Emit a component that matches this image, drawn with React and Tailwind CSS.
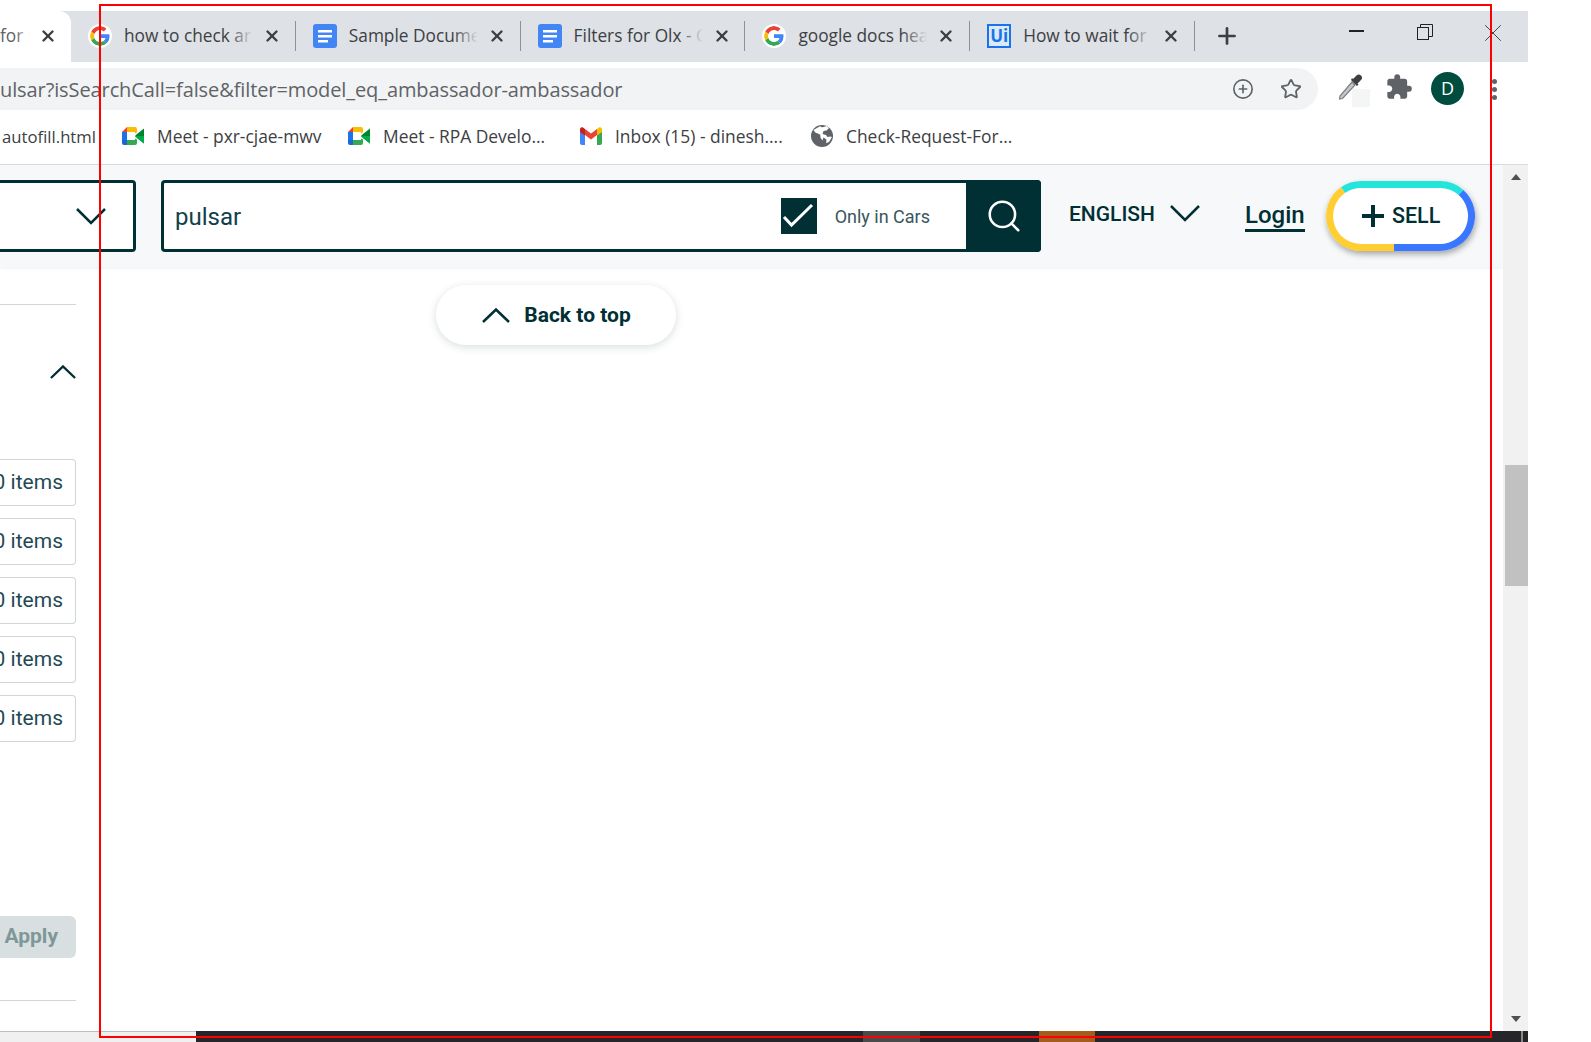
import React from 'react';
import { X, Plus, Star, CirclePlus, Search } from 'lucide-react';
import { MdExtension } from 'react-icons/md';

const GoogleIcon = () => (
  <svg viewBox="0 0 48 48" className="w-[24px] h-[24px] rounded-full bg-white p-[2px]">
    <path fill="#EA4335" d="M24 9.5c3.5 0 6.7 1.2 9.2 3.6l6.9-6.9C35.9 2.4 30.5 0 24 0 14.6 0 6.5 5.4 2.6 13.2l8 6.2C12.5 13.7 17.8 9.5 24 9.5z" />
    <path fill="#4285F4" d="M47 24.5c0-1.6-.1-3.100-.4-4.500H24v9h12.900c-.6 3-2.200 5.500-4.700 7.200l7.700 6c4.500-4.200 7.100-10.300 7.100-17.700z" />
    <path fill="#FBBC05" d="M10.500 28.600c-.5-1.500-.8-3-.8-4.600s.3-3.100.8-4.600l-8-6.200C.9 16.500 0 20.100 0 24s.9 7.500 2.600 10.800l7.900-6.200z" />
    <path fill="#34A853" d="M24 48c6.500 0 11.900-2.100 15.900-5.800l-7.700-6c-2.100 1.400-4.900 2.300-8.200 2.300-6.200 0-11.500-4.200-13.400-9.900l-8 6.200C6.500 42.600 14.600 48 24 48z" />
  </svg>
);

const DocsIcon = () => (
  <svg viewBox="0 0 24 24" className="w-[24px] h-[24px]">
    <rect x="0" y="0" width="24" height="24" rx="3" fill="#4285f4" />
    <rect x="5" y="6" width="14" height="2.500" fill="#fff" />
    <rect x="5" y="11" width="14" height="2.500" fill="#fff" />
    <rect x="5" y="16" width="10" height="2.500" fill="#fff" />
  </svg>
);

const UiIcon = () => (
  <div className="w-[24px] h-[24px] border-2 border-[#1a73e8] bg-[#dbe9fb] flex items-center justify-center text-[#1a73e8] text-[17px] font-bold leading-none">
    Ui
  </div>
);

const MeetIcon = () => (
  <svg viewBox="0 0 22 18" className="w-[22px] h-[18px]">
    <path fill="#ea4335" d="M5 0v5H0z" />
    <path fill="#1a73e8" d="M0 5h5v8H0z" />
    <path fill="#1967d2" d="M0 13h5v5H2a2 2 0 0 1-2-2z" />
    <path fill="#fbbc04" d="M5 0h8a2 2 0 0 1 2 2v3.500l-2 1V5H5z" />
    <path fill="#34a853" d="M5 13h8v-1.500l2 1V16a2 2 0 0 1-2 2H5z" />
    <path fill="#00832d" d="M13 9l2-2 7-5.500v15L15 11z" />
    <path fill="#00ac47" d="M13 9l2 2 7 5.500V9z" />
  </svg>
);

const GmailIcon = () => (
  <svg viewBox="0 0 22 18" className="w-[22px] h-[18px]">
    <path fill="#4285f4" d="M0 3v13a2 2 0 0 0 2 2h3V7z" />
    <path fill="#34a853" d="M17 7v11h3a2 2 0 0 0 2-2V3z" />
    <path fill="#ea4335" d="M5 2v6l6 4.500L17 8V2l-6 4.500z" />
    <path fill="#c5221f" d="M0 2.500V5l5 3.500V2L3 .6C1.700-.3 0 .7 0 2.500z" />
    <path fill="#fbbc04" d="M22 2.500V5l-5 3.500V2l2-1.400c1.300-.9 3 .1 3 1.900z" />
  </svg>
);

const GlobeIcon = () => (
  <svg viewBox="0 0 22 22" className="w-[22px] h-[22px]">
    <circle cx="11" cy="11" r="11" fill="#5f6368" />
    <path fill="#fff" d="M9 1.200c1 1 2.500 1.300 3.500.8l3-1 2.500 2-2.500 2.500-3 .5-1 3 3.500 1 1.500 2 3.500-.5.8.8-2.600 4.500-3 1.500.2-3.800-3-2-.8 3-2-2.500-.5-3.500-4.800-2L2.500 5z" />
  </svg>
);

const Eyedropper = () => (
  <svg viewBox="0 0 26 28" className="w-[26px] h-[28px]">
    <path d="M2 24l-.5 3 3-.5L17 13l-3-3z" fill="#c4c7c9" stroke="#7b7f83" strokeWidth="1.200" />
    <path d="M13 8l6 6 1.500-1.500-1-1 3.500-3.500a3 3 0 0 0-4.500-4.500L15 7l-1-1z" fill="#3c4043" />
  </svg>
);

// thin chevrons of the page, wider than lucide's
const ChevDown = ({ className }) => (
  <svg viewBox="0 0 30 17" fill="none" stroke="#002f34" strokeWidth="2.500" className={`w-[30px] h-[17px] shrink-0 ${className || ''}`}>
    <path d="M1 1l14 14L29 1" />
  </svg>
);

const ChevUp = ({ className }) => (
  <svg viewBox="0 0 28 15" fill="none" stroke="#002f34" strokeWidth="2.500" className={`shrink-0 ${className || ''}`}>
    <path d="M1 14L14 1.500 27 14" />
  </svg>
);

const tabs = [
  { icon: <GoogleIcon />, title: 'how to check ar' },
  { icon: <DocsIcon />, title: 'Sample Docume' },
  { icon: <DocsIcon />, title: 'Filters for Olx - G' },
  { icon: <GoogleIcon />, title: 'google docs hea' },
  { icon: <UiIcon />, title: 'How to wait for' },
];

const bookmarks = [
  { icon: <MeetIcon />, title: 'Meet - pxr-cjae-mwv', width: 'w-[226px]' },
  { icon: <MeetIcon />, title: 'Meet - RPA Develo...', width: 'w-[232px]' },
  { icon: <GmailIcon />, title: 'Inbox (15) - dinesh....', width: 'w-[231px]' },
  { icon: <GlobeIcon />, title: 'Check-Request-For...', width: 'w-[200px]' },
];

const itemRows = [0, 1, 2, 3, 4];

const browserFont = "font-['Open_Sans','Noto_Sans',sans-serif]";

const Tab = ({ icon, title }) => (
  <div className="w-[220.8px] h-[30px] flex items-center shrink-0 border-r border-[#8d9094] box-content pr-[3px]">
    <div className="ml-[17px] w-[24px] h-[24px] flex items-center justify-center shrink-0">{icon}</div>
    <div className="relative ml-[12px] w-[129px] overflow-hidden whitespace-nowrap text-[17.3px] text-[#3c4043] leading-[30px]">
      {title}
      <div className="absolute right-0 top-0 bottom-0 w-[24px] bg-gradient-to-r from-transparent to-[#dee1e6]" />
    </div>
    <X className="ml-[10px] w-[18px] h-[18px] text-[#3c4043] shrink-0" strokeWidth={3.200} />
  </div>
);

const App = () => {
  return (
    <div className="relative w-[1591px] h-[1042px] overflow-hidden bg-white font-['Roboto',sans-serif]">
      <div className="w-[1528px] h-[1042px] flex flex-col pt-[11px]">
        {/* tab strip */}
        <div className={`h-[51px] flex bg-[#dee1e6] shrink-0 ${browserFont}`}>
          <div className="w-[71px] shrink-0 bg-white rounded-tr-[12px] flex items-center justify-between pr-[14px] pb-[2px]">
            <span className="relative w-[30px] overflow-hidden text-[17.3px] text-[#5f6368] whitespace-nowrap">
              for s
              <span className="absolute right-0 top-0 bottom-0 w-[14px] bg-gradient-to-r from-transparent to-white" />
            </span>
            <X className="w-[18px] h-[18px] text-[#3c4043] shrink-0" strokeWidth={3.200} />
          </div>
          <div className="flex-1 flex items-center rounded-bl-[12px] bg-[#dee1e6] pb-[2px]">
            {tabs.map((tab, i) => (
              <Tab key={i} icon={tab.icon} title={tab.title} />
            ))}
            <Plus className="ml-[19px] w-[26px] h-[26px] text-[#3c4043] shrink-0" strokeWidth={2.500} />
            <div className="ml-[109px] mb-[9px] w-[15px] h-[1.500px] bg-[#222]" />
            <svg viewBox="0 0 16 16" className="ml-[53px] w-[16px] h-[16px] mb-[7px]" fill="none" stroke="#222" strokeWidth="1">
              <rect x="0.500" y="3.500" width="11" height="12" />
              <path d="M3.500 3.500v-3h12v12h-4" />
            </svg>
            <X className="ml-[45px] mb-[6px] w-[30px] h-[30px] text-[#444]" strokeWidth={0.800} />
          </div>
        </div>

        {/* address bar */}
        <div className={`h-[48px] flex items-start pt-[6px] shrink-0 ${browserFont}`}>
          <div className="w-[1318px] h-[42px] bg-[#f1f3f4] rounded-r-[21px] flex items-center overflow-hidden">
            <span className="flex-1 pt-[1px] text-[20px] tracking-[-0.1px] text-[#5f6368] whitespace-nowrap">ulsar?isSearchCall=false&amp;filter=model_eq_ambassador-ambassador</span>
            <CirclePlus className="w-[22px] h-[22px] text-[#5f6368]" strokeWidth={1.800} />
            <Star className="ml-[26px] mr-[16px] w-[22px] h-[22px] text-[#5f6368]" strokeWidth={2} />
          </div>
          <div className="ml-[20px] relative mt-[4px]">
            <Eyedropper />
            <div className="absolute left-[14px] top-[17px] w-[18px] h-[18px] bg-[#f4f5f5]" />
          </div>
          <MdExtension className="ml-[21px] mt-[5px] w-[28px] h-[28px] text-[#5f6368]" />
          <div className="ml-[18px] mt-[4px] w-[33px] h-[33px] rounded-full bg-[#004d40] text-white text-[18px] flex items-center justify-center">D</div>
          <div className="ml-[28px] mt-[11px] flex flex-col gap-[3px]">
            <div className="w-[5px] h-[5px] rounded-full bg-[#5f6368]" />
            <div className="w-[5px] h-[5px] rounded-full bg-[#5f6368]" />
            <div className="w-[5px] h-[5px] rounded-full bg-[#5f6368]" />
          </div>
        </div>

        {/* bookmarks */}
        <div className={`h-[55px] flex items-center border-b border-[#dadce0] shrink-0 text-[17.4px] text-[#3c4043] whitespace-nowrap pb-[1px] ${browserFont}`}>
          <span className="w-[122px] pl-[2px] shrink-0 text-[16.7px]">autofill.html</span>
          {bookmarks.map((b, i) => (
            <div key={i} className={`flex items-center gap-[13px] shrink-0 ${b.width}`}>
              <div className="shrink-0 flex">{b.icon}</div>
              <span>{b.title}</span>
            </div>
          ))}
        </div>

        {/* page + scrollbar */}
        <div className="flex-1 flex min-h-0">
          <div className="w-[1503px] flex flex-col">
            <header className="h-[102px] shrink-0 bg-[#f7f8f9] shadow-[0_1px_3px_rgba(0,47,52,0.08)] flex items-center text-[#002f34]">
              <div className="w-[136px] h-[72px] shrink-0 border-[3px] border-l-0 border-[#002f34] rounded-r-[4px] bg-white flex items-center justify-end pr-[27px]">
                <ChevDown />
              </div>
              <div className="ml-[25px] w-[880px] h-[72px] shrink-0 flex border-[3px] border-[#002f34] rounded-[4px] bg-white">
                <div className="flex-1 flex items-center pl-[11px] text-[24px] text-[#12404a]">
                  <span className="flex-1 pt-[2px]">pulsar</span>
                  <div className="w-[36px] h-[36px] bg-[#002f34] flex items-center justify-center">
                    <svg viewBox="0 0 36 36" fill="none" stroke="#fff" strokeWidth="3" className="w-[36px] h-[36px]">
                      <path d="M3 19l7.500 8L31 7" />
                    </svg>
                  </div>
                  <span className="ml-[18px] mr-[36px] text-[18px] text-[#38575c]">Only in Cars</span>
                </div>
                <div className="w-[75px] -mr-[3px] -my-[3px] bg-[#002f34] rounded-r-[4px] flex items-center justify-center">
                  <Search className="w-[38px] h-[38px] text-white" strokeWidth={1.600} />
                </div>
              </div>
              <span className="ml-[28px] mb-[2px] text-[21px] font-medium">ENGLISH</span>
              <ChevDown className="ml-[15px] mb-[6px]" />
              <span className="ml-[45px] text-[24px] font-medium leading-[28px] border-b-[3px] border-[#002f34]">Login</span>
              <div className="ml-[21px] relative w-[149px] h-[70px] rounded-full bg-white shadow-[1px_3px_6px_rgba(0,0,0,0.35)] flex items-center justify-center gap-[6px]">
                <svg viewBox="0 0 149 70" className="absolute inset-0 w-[149px] h-[70px]" fill="none" strokeWidth="7">
                  <path d="M17 9.200A31.500 31.500 0 0 1 35 3.500H114A31.500 31.500 0 0 1 135 11.500" stroke="#23e5db" />
                  <path d="M135 11.500A31.500 31.500 0 0 1 114 66.500H68" stroke="#3a77ff" />
                  <path d="M68 66.500H35A31.500 31.500 0 0 1 17 9.200" stroke="#ffce32" />
                </svg>
                <svg viewBox="0 0 26 26" className="relative w-[26px] h-[26px]" fill="none" stroke="#002f34" strokeWidth="4">
                  <path d="M13 2v22M2 13h22" />
                </svg>
                <span className="relative text-[21.5px] font-medium">SELL</span>
              </div>
            </header>

            <div className="flex-1 flex min-h-0">
              {/* sidebar */}
              <aside className="w-[76px] shrink-0 flex flex-col">
                <div className="mt-[37px] h-px bg-[#ced6d9]" />
                <ChevUp className="mt-[60px] ml-[50px] w-[26px] h-[14px]" />
                <div className="mt-[80px] flex flex-col gap-[12px]">
                  {itemRows.map((r) => (
                    <div key={r} className="h-[47px] border border-l-0 border-[#ced6d9] rounded-r-[4px] flex items-center justify-end pr-[12px] text-[21px] text-[#1f4a55] whitespace-nowrap">
                      0 items
                    </div>
                  ))}
                </div>
                <div className="mt-[174px] h-[42px] bg-[#d8dfe0] rounded-r-[6px] flex items-center justify-end pr-[18px] text-[21px] font-bold text-[#7f9799]">
                  Apply
                </div>
                <div className="mt-[42px] h-px bg-[#ced6d9]" />
              </aside>
              <div className="flex-1">
                <button className="ml-[360px] mt-[18px] w-[240px] h-[60px] pl-[1px] rounded-full bg-white shadow-[0_2px_8px_rgba(0,47,52,0.16)] flex items-center justify-center gap-[14px] text-[#002f34] text-[21px] font-bold">
                  <ChevUp className="w-[28px] h-[15px]" />
                  <span className="pt-[2px]">Back to top</span>
                </button>
              </div>
            </div>
          </div>

          <div className="w-[25px] shrink-0 bg-[#f1f1f1] flex flex-col items-center justify-between py-[9px]">
            <div className="w-0 h-0 border-x-[5px] border-x-transparent border-b-[6px] border-b-[#505050]" />
            <div className="w-0 h-0 border-x-[5px] border-x-transparent border-t-[6px] border-t-[#505050]" />
          </div>
        </div>

        {/* bottom: horizontal scrollbar and taskbar sliver */}
        <div className="h-[11px] shrink-0 flex">
          <div className="w-[196px] bg-[#f0f0f0] border-t border-[#bdbdbd]" />
          <div className="flex-1 bg-[#26262a] flex overflow-hidden">
            <div className="ml-[667px] w-[57px] bg-[#4a4a4a]" />
            <div className="ml-[119px] w-[56px] bg-[#a55b1e]" />
            <span className="ml-[278px] w-[40px] pt-[8px] text-[16px] leading-[20px] text-white whitespace-nowrap">10:35</span>
            <div className="ml-[108px] w-[2px] bg-[#8a8a8a]" />
          </div>
        </div>
      </div>

      {/* scrollbar thumb */}
      <div className="absolute left-[1505px] top-[465px] w-[23px] h-[121px] bg-[#c1c1c1]" />
      {/* red annotation frame */}
      <div className="absolute left-[99px] top-[4px] w-[1393px] h-[1034px] border-2 border-[#ff0000] pointer-events-none" />
    </div>
  );
};

export default App;
